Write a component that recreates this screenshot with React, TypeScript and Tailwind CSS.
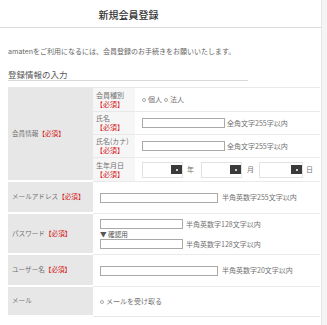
import React from "react";

const Req = () => <span className="text-[#d42020]">【必須】</span>;

const Input = ({ w }: { w: string }) => (
  <div className={`${w} h-[10px] border border-[#a9a9a9] bg-white shrink-0`} />
);

const Select = ({ w }: { w: string }) => (
  <div className={`${w} h-[16px] border border-[#e2e2e2] bg-white flex items-center justify-end shrink-0`}>
    <div className="w-[11px] h-[9px] bg-[#3a3a3a] flex items-center justify-center">
      <div className="w-[2px] h-[2px] bg-white rounded-full" />
    </div>
  </div>
);

const Radio = () => (
  <span className="inline-block w-[4px] h-[4px] rounded-full border border-[#aaa] mr-[2px] align-middle" />
);

export default function App() {
  const c1 = "bg-[#e7e7e7] border-b-2 border-white flex items-center pl-[4px] text-[6.6px] text-[#727272]";
  const c2 = "bg-[#f6f6f6] border-b border-[#e9e9e9] flex flex-col justify-center pl-[3px] text-[7px] leading-[9px] text-[#727272]";
  const c3 = "bg-white border-b border-[#e9e9e9] flex items-center pl-[7px] text-[7px] text-[#727272]";
  const c4 = "col-span-2 bg-white border-b border-[#e9e9e9] flex items-center pl-[7px] text-[7px] text-[#727272]";
  return (
    <div
      className="w-[327px] h-[325px] flex bg-white overflow-hidden"
      style={{ fontFamily: '"Noto Sans CJK JP", "Noto Sans", sans-serif' }}
    >
      <div className="w-[321px] shrink-0 flex flex-col">
        <div className="h-[28px] border-b border-[#dcdcdc] flex items-center justify-center pr-[64px] pt-[1px] text-[10px] font-medium text-[#333]">
          新規会員登録
        </div>
        <div className="pl-[8px] pt-[19px] text-[7px] leading-[9px] text-[#666]">
          amatenをご利用になるには、会員登録のお手続きをお願いいたします。
        </div>
        <div className="ml-[8px] w-[240px] mt-[13px] h-[12px] border-b border-[#d8d8d8] text-[8.5px] leading-[10px] text-[#555]">
          登録情報の入力
        </div>
        <div className="ml-[8px] mt-[6px] w-[312px] border-t border-r border-[#e9e9e9] grid grid-cols-[85px_42px_185px] grid-rows-[24px_23px_23px_24px_32px_41px_32px_30px]">
          <div className={`${c1} row-span-4`}>
            会員情報 <Req />
          </div>
          <div className={c2}>
            <div>会員種別</div>
            <div><Req /></div>
          </div>
          <div className={c3}>
            <Radio />個人 <span className="ml-[2px]" /><Radio />法人
          </div>
          <div className={c2}>
            <div>氏名</div>
            <div><Req /></div>
          </div>
          <div className={c3}>
            <Input w="w-[83px]" />
            <span className="ml-[2px]">全角文字255字以内</span>
          </div>
          <div className={c2}>
            <div>氏名(カナ)</div>
            <div><Req /></div>
          </div>
          <div className={c3}>
            <Input w="w-[83px]" />
            <span className="ml-[2px]">全角文字255字以内</span>
          </div>
          <div className={c2}>
            <div>生年月日</div>
            <div><Req /></div>
          </div>
          <div className={c3}>
            <Select w="w-[41px]" />
            <span className="ml-[4px] mr-[7px]">年</span>
            <Select w="w-[41px]" />
            <span className="ml-[5px] mr-[5px]">月</span>
            <Select w="w-[44px]" />
            <span className="ml-[3px]">日</span>
          </div>

          <div className={c1}>
            メールアドレス<Req />
          </div>
          <div className={c4}>
            <Input w="w-[118px]" />
            <span className="ml-[4px]">半角英数字255文字以内</span>
          </div>

          <div className={c1}>
            パスワード <Req />
          </div>
          <div className={`${c4} flex-col !items-start justify-center`}>
            <div className="flex items-center">
              <Input w="w-[83px]" />
              <span className="ml-[3px]">半角英数字128文字以内</span>
            </div>
            <div className="text-[6.6px] leading-[10px] text-[#555]">▼ 確認用</div>
            <div className="flex items-center">
              <Input w="w-[83px]" />
              <span className="ml-[3px]">半角英数字128文字以内</span>
            </div>
          </div>

          <div className={c1}>
            ユーザー名 <Req />
          </div>
          <div className={c4}>
            <Input w="w-[118px]" />
            <span className="ml-[4px]">半角英数字20文字以内</span>
          </div>

          <div className={c1}>メール</div>
          <div className={c4}>
            <Radio />メールを受け取る
          </div>
        </div>
      </div>
      <div className="flex-1 bg-[#f4f4f4] border-l border-[#e6e6e6]" />
    </div>
  );
}
